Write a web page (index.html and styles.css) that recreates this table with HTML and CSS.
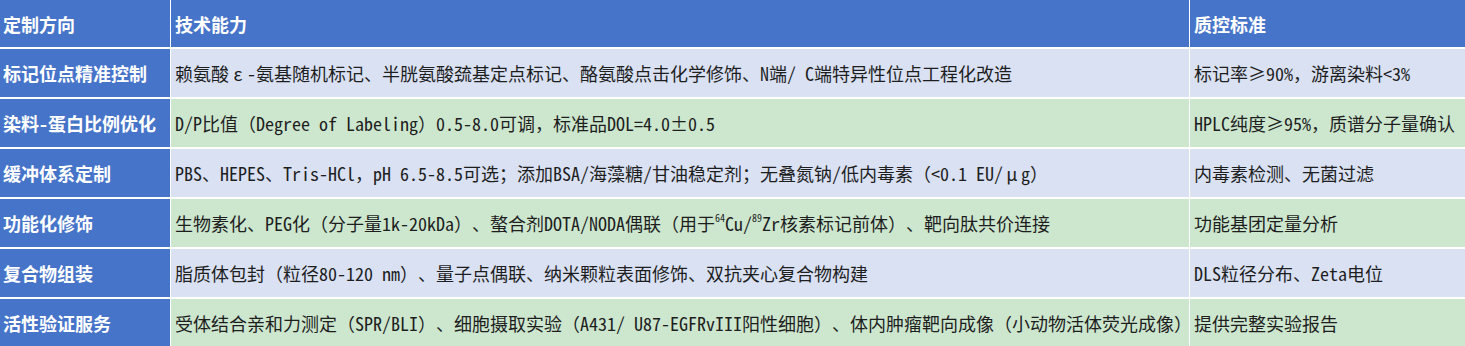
FILE: index.html
```html
<!DOCTYPE html>
<html lang="zh-CN">
<head>
<meta charset="utf-8">
<title>定制服务</title>
<link rel="stylesheet" href="styles.css">
</head>
<body>
<div class="table">
  <div class="cell head first">定制方向</div>
  <div class="cell head">技术能力</div>
  <div class="cell head">质控标准</div>

  <div class="cell first">标记位点精准控制</div>
  <div class="cell blue">赖氨酸<span class="fw">ε</span>-氨基随机标记、半胱氨酸巯基定点标记、酪氨酸点击化学修饰、N端/ C端特异性位点工程化改造</div>
  <div class="cell blue">标记率≥90%，游离染料&lt;3%</div>

  <div class="cell first">染料-蛋白比例优化</div>
  <div class="cell green">D/P比值（Degree of Labeling）0.5-8.0可调，标准品DOL=4.0±0.5</div>
  <div class="cell green">HPLC纯度≥95%，质谱分子量确认</div>

  <div class="cell first">缓冲体系定制</div>
  <div class="cell blue">PBS、HEPES、Tris-HCl，pH 6.5-8.5可选；添加BSA/海藻糖/甘油稳定剂；无叠氮钠/低内毒素（&lt;0.1 EU/<span class="fw">μ</span>g）</div>
  <div class="cell blue">内毒素检测、无菌过滤</div>

  <div class="cell first">功能化修饰</div>
  <div class="cell green">生物素化、PEG化（分子量1k-20kDa）、螯合剂DOTA/NODA偶联（用于<span class="sup">64</span>Cu/<span class="sup">89</span>Zr核素标记前体）、靶向肽共价连接</div>
  <div class="cell green">功能基团定量分析</div>

  <div class="cell first">复合物组装</div>
  <div class="cell blue">脂质体包封（粒径80-120 nm）、量子点偶联、纳米颗粒表面修饰、双抗夹心复合物构建</div>
  <div class="cell blue">DLS粒径分布、Zeta电位</div>

  <div class="cell first">活性验证服务</div>
  <div class="cell green">受体结合亲和力测定（SPR/BLI）、细胞摄取实验（A431/ U87-EGFRvIII阳性细胞）、体内肿瘤靶向成像（小动物活体荧光成像）</div>
  <div class="cell green">提供完整实验报告</div>
</div>
</body>
</html>
```

FILE: styles.css
```css
html, body {
  margin: 0;
  padding: 0;
  background: #ffffff;
  overflow: hidden;
}

.table {
  display: grid;
  grid-template-columns: 170px 1018px 1fr;
  grid-template-rows: 47px repeat(6, 48px);
  column-gap: 1px;
  row-gap: 2px;
  width: 1465px;
  background: #ffffff;
}

.cell {
  display: flex;
  align-items: center;
  padding: 0 0 0 4px;
  font-family: "Noto Sans Mono CJK SC", "Noto Sans CJK SC", monospace;
  font-size: 18px;
  color: #1e1e1e;
  white-space: pre;
  min-width: 0;
  text-spacing-trim: space-all;
  font-feature-settings: "halt" 0, "chws" 0;
}

.head {
  background: #4674c9;
  color: #ffffff;
  font-weight: 700;
}

.first {
  background: #4674c9;
  color: #ffffff;
  font-weight: 700;
  padding-left: 3px;
}

.blue {
  background: #d9e1f3;
}

.green {
  background: #cde7cf;
}

.fw {
  display: inline-block;
  width: 18px;
  text-align: center;
}

.sup {
  font-size: 10px;
  line-height: 1;
  align-self: flex-start;
  margin-top: 14px;
}
```
